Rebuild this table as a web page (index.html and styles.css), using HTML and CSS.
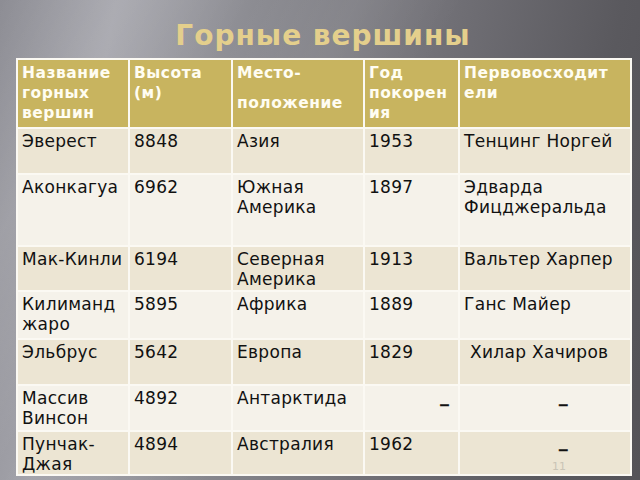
FILE: index.html
```html
<!DOCTYPE html>
<html lang="ru">
<head>
<meta charset="utf-8">
<title>Горные вершины</title>
<link rel="stylesheet" href="styles.css">
</head>
<body>
<div class="slide">
  <h1 class="title">Горные вершины</h1>
  <div class="table-wrap">
    <table class="peaks">
      <colgroup>
        <col class="c1"><col class="c2"><col class="c3"><col class="c4"><col class="c5">
      </colgroup>
      <thead>
        <tr class="r-head">
          <th>Название<br>горных<br>вершин</th>
          <th>Высота<br>(м)</th>
          <th><div class="gap-line">Место-</div>положение</th>
          <th>Год<br>покорен<br>ия</th>
          <th>Первовосходит<br>ели</th>
        </tr>
      </thead>
      <tbody>
        <tr class="r1 dark"><td>Эверест</td><td>8848</td><td>Азия</td><td>1953</td><td>Тенцинг Норгей</td></tr>
        <tr class="r2 light"><td>Аконкагуа</td><td>6962</td><td>Южная<br>Америка</td><td>1897</td><td>Эдварда<br>Фицджеральда</td></tr>
        <tr class="r3 dark"><td>Мак-Кинли</td><td>6194</td><td>Северная<br>Америка</td><td>1913</td><td>Вальтер Харпер</td></tr>
        <tr class="r4 light"><td>Килиманд<br>жаро</td><td>5895</td><td>Африка</td><td>1889</td><td>Ганс Майер</td></tr>
        <tr class="r5 dark"><td>Эльбрус</td><td>5642</td><td>Европа</td><td>1829</td><td><span class="indent">Хилар Хачиров</span></td></tr>
        <tr class="r6 light"><td>Массив<br>Винсон</td><td>4892</td><td>Антарктида</td><td><div class="dash dash-right">–</div></td><td><div class="dash dash-mid">–</div></td></tr>
        <tr class="r7 dark"><td>Пунчак-<br>Джая</td><td>4894</td><td>Австралия</td><td>1962</td><td><div class="dash dash-mid dash-low">–</div></td></tr>
      </tbody>
    </table>
    <span class="slide-num">11</span>
  </div>
</div>
</body>
</html>
```
FILE: styles.css
```css
html, body {
  margin: 0;
  padding: 0;
}
body {
  width: 640px;
  height: 480px;
  overflow: hidden;
  font-family: "DejaVu Sans", "Liberation Sans", sans-serif;
}
.slide {
  width: 640px;
  height: 480px;
  box-sizing: border-box;
  padding: 0 10px 0 16px;
  background:
    linear-gradient(118deg, rgba(255,255,255,0) 0%, rgba(255,255,255,0.10) 14%, rgba(255,255,255,0) 28%, rgba(255,255,255,0.06) 40%, rgba(255,255,255,0) 52%),
    linear-gradient(100deg, #8d8d94 0%, #a3a3aa 16%, #8b8b91 36%, #717076 62%, #5a595e 86%, #545358 100%);
  display: flex;
  flex-direction: column;
}
.title {
  margin: 0;
  height: 58px;
  box-sizing: border-box;
  padding-top: 19px;
  text-align: center;
  font-size: 28px;
  line-height: 34px;
  font-weight: bold;
  color: #e4cf8c;
  letter-spacing: 1px;
}
.table-wrap {
  position: relative;
  width: 614px;
}
.peaks {
  width: 614px;
  border-collapse: collapse;
  table-layout: fixed;
  font-size: 17px;
  line-height: 20px;
  color: #111;
}
.c1 { width: 112px; }
.c2 { width: 103px; }
.c3 { width: 132px; }
.c4 { width: 95px; }
.c5 { width: 172px; }
.peaks th, .peaks td {
  border: 2px solid #fbf9f3;
  vertical-align: top;
  text-align: left;
  padding: 2px 3px 0 4px;
  white-space: nowrap;
  overflow: hidden;
}
.peaks th {
  background: #c8b45f;
  color: #fffdf2;
  font-weight: bold;
  font-size: 15.5px;
  padding-top: 3px;
  letter-spacing: 0.5px;
}
.peaks td { letter-spacing: 0.3px; }
.gap-line { margin-bottom: 10px; }
.dark td { background: #ece5d3; }
.light td { background: #f5f2ea; }
.r-head { height: 69px; }
.r1 { height: 46px; }
.r2 { height: 72px; }
.r3 { height: 45px; }
.r4 { height: 48px; }
.r5 { height: 46px; }
.r6 { height: 46px; }
.r7 { height: 43px; }
.indent { padding-left: 6px; }
.dash {
  font-size: 21px;
  line-height: 20px;
  -webkit-text-stroke: 0.5px #111;
}
.dash-right {
  padding-top: 6px;
  text-align: right;
  padding-right: 5px;
}
.dash-mid {
  padding-top: 6px;
  padding-left: 94px;
}
.dash-low { padding-top: 5px; }
.slide-num {
  position: absolute;
  right: 64px;
  bottom: 3px;
  font-size: 11px;
  line-height: 12px;
  color: #c9c4b6;
}
```
